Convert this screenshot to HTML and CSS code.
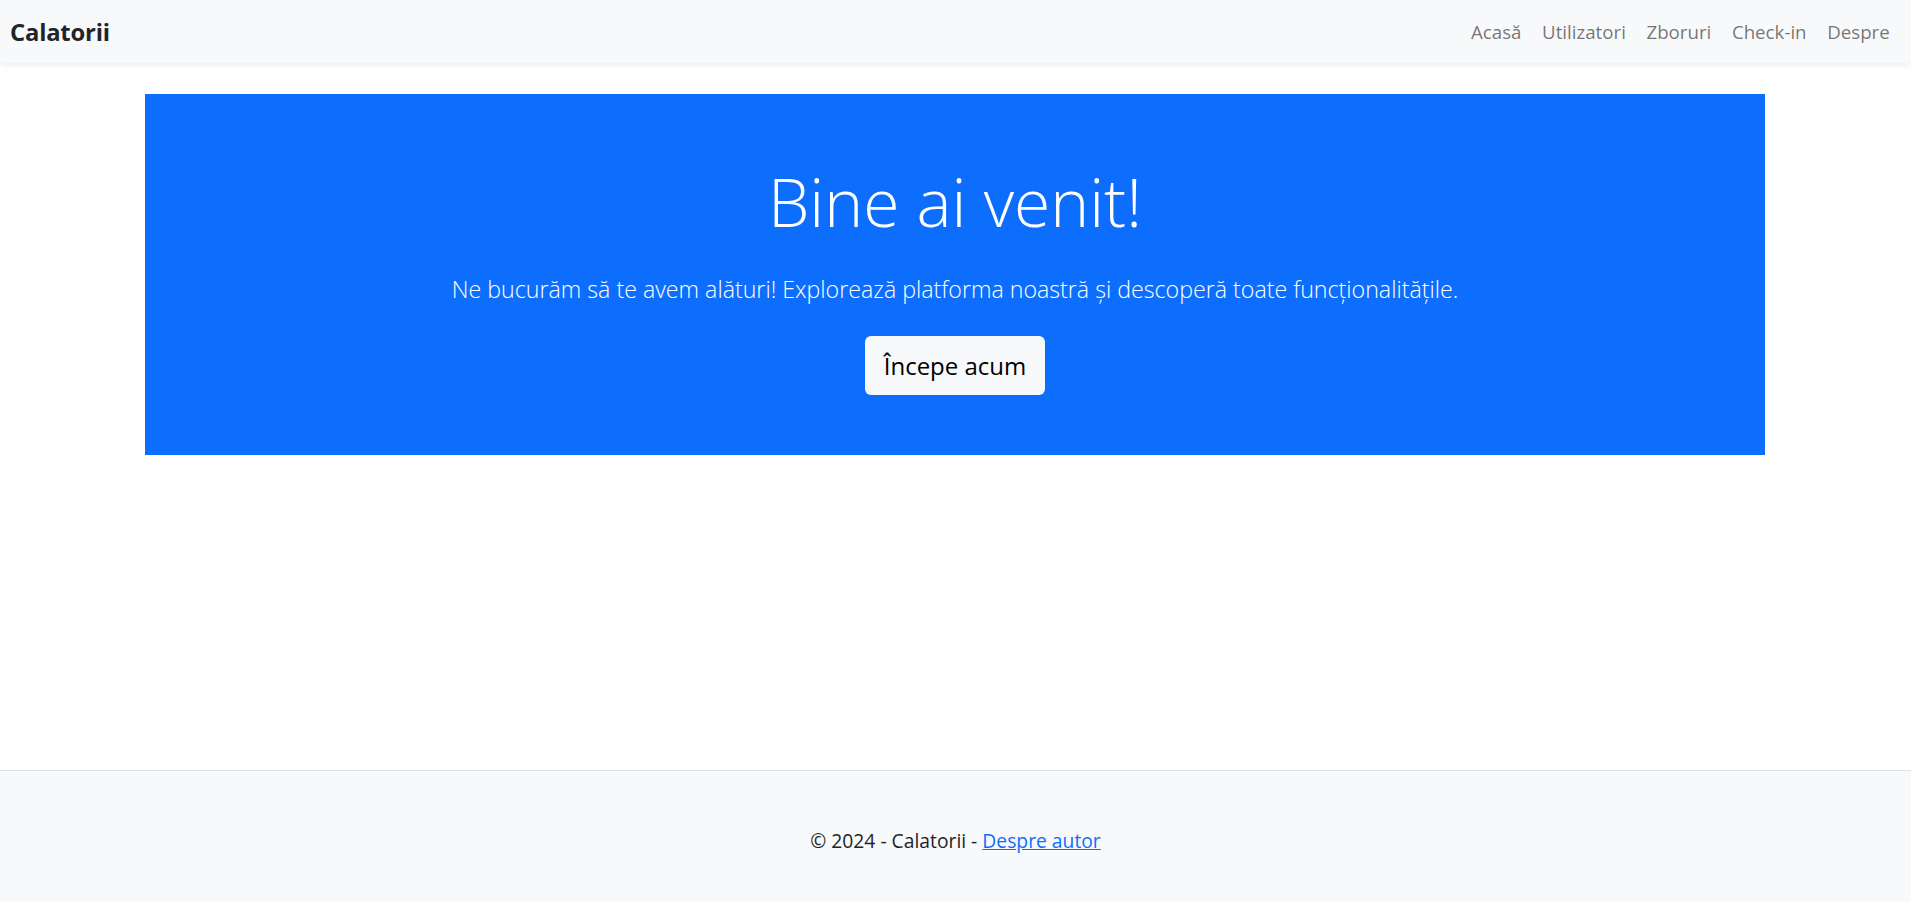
FILE: index.html
```html
<!DOCTYPE html>
<html lang="ro">
<head>
<meta charset="utf-8">
<title>Calatorii</title>
<link rel="stylesheet" href="styles.css">
</head>
<body>
<nav class="navbar">
  <a class="brand" href="#">Calatorii</a>
  <ul class="nav-links">
    <li><a href="#">Acasă</a></li>
    <li><a href="#">Utilizatori</a></li>
    <li><a href="#">Zboruri</a></li>
    <li><a href="#">Check-in</a></li>
    <li><a href="#">Despre</a></li>
  </ul>
</nav>
<main class="main">
  <section class="hero">
    <h1 class="hero-title">Bine ai venit!</h1>
    <p class="hero-lead">Ne bucurăm să te avem alături! Explorează platforma noastră și descoperă toate funcționalitățile.</p>
    <a class="btn-start" href="#">Începe acum</a>
  </section>
</main>
<footer class="footer">
  <p>© 2024 - Calatorii - <a href="#">Despre autor</a></p>
</footer>
</body>
</html>
```
FILE: styles.css
```css
* { box-sizing: border-box; }
html, body { margin: 0; padding: 0; }
body {
  font-family: "Open Sans", "Noto Sans", sans-serif;
  color: #212529;
  background: #fff;
  min-height: 100vh;
  display: flex;
  flex-direction: column;
  font-size: 18px;
}
.navbar {
  height: 63px;
  background: #f8f9fa;
  display: flex;
  align-items: center;
  justify-content: space-between;
  padding: 0 11px 0 10px;
  box-shadow: 0 2px 6px rgba(0,0,0,0.08);
  position: relative;
  z-index: 1;
}
.brand {
  font-weight: 700;
  font-size: 23.8px;
  color: #212529;
  text-decoration: none;
  letter-spacing: -0.2px;
}
.nav-links {
  list-style: none;
  margin: 0;
  padding: 0;
  display: flex;
}
.nav-links a {
  display: block;
  padding: 8px 10.3px;
  color: rgba(0,0,0,0.55);
  text-decoration: none;
  font-size: 18.7px;
}
.main { flex: 1; padding: 31px 146px 0 145px; }
.hero {
  background: #0d6efd;
  color: #fff;
  text-align: center;
  padding: 66px 20px 60px;
}
.hero-title {
  margin: 0 0 29px;
  font-weight: 300;
  font-size: 66px;
  line-height: 82px;
}
.hero-lead {
  margin: 0 0 29px;
  font-weight: 300;
  font-size: 23.2px;
  line-height: 36px;
}
.btn-start {
  display: inline-block;
  background: #f8f9fa;
  color: #000;
  text-decoration: none;
  font-size: 24px;
  line-height: 36px;
  padding: 11.5px 19px;
  border-radius: 6px;
}
.footer {
  background: #f8f9fa;
  border-top: 1px solid #dee2e6;
  text-align: center;
  padding: 55px 0 47px;
  height: 132px;
}
.footer p { margin: 0; line-height: 29px; font-size: 19.3px; }
.footer a { color: #0d6efd; }
```
